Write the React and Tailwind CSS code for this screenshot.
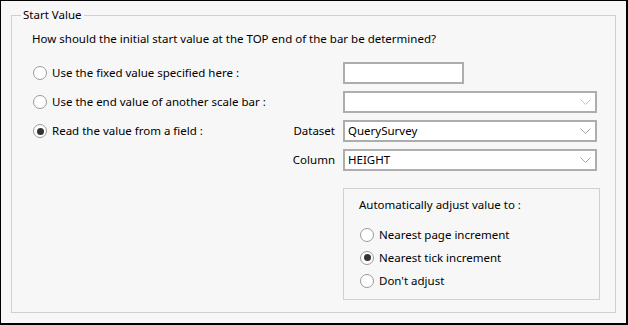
import React from "react";

function Radio({ checked }) {
  return (
    <span className="flex h-[14px] w-[14px] shrink-0 items-center justify-center rounded-full border-[1.5px] border-[#9a9a9a] bg-white">
      {checked && <span className="h-[7px] w-[7px] rounded-full bg-[#333333]" />}
    </span>
  );
}

function Chevron({ light }) {
  return (
    <svg width="11" height="6" viewBox="0 0 11 6" className="mr-[4px]">
      <path d="M0.5 0.5 L5.5 5.5 L10.5 0.5" fill="none" stroke={light ? "#c4c4c4" : "#a6a6a6"} strokeWidth="1" />
    </svg>
  );
}

function Combo({ value, light }) {
  return (
    <div className="flex h-[22px] w-[254px] items-center justify-between border-2 border-[#adadad] bg-white pl-[3px]">
      <span className="leading-[16px]">{value}</span>
      <Chevron light={light} />
    </div>
  );
}

export default function App() {
  return (
    <div
      className="flex h-[325px] w-[628px] border-b-2 border-l border-r-2 border-t border-black bg-[#f7f7f7] pb-[10px] pl-[10px] pr-[10px] pt-[6px] text-[11.5px] text-black"
      style={{ fontFamily: '"Noto Sans", sans-serif' }}
    >
      <fieldset className="m-0 min-w-0 flex-1 border border-[#d0d0d0] p-0">
        <legend className="ml-[9px] px-[2px] leading-[16px]">Start Value</legend>
        <div className="pl-[20px] pt-[8px]">
          <div className="leading-[16px]">How should the initial start value at the TOP end of the bar be determined?</div>
          <div className="mt-[15px] flex flex-col gap-[7px]">
            <div className="flex h-[22px] items-center">
              <div className="flex w-[258px] items-center">
                <span className="ml-[1px]"><Radio /></span>
                <span className="ml-[5px] leading-[16px]">Use the fixed value specified here :</span>
              </div>
              <div className="w-[53px]" />
              <div className="h-[22px] w-[121px] border-2 border-[#adadad] bg-white" />
            </div>
            <div className="flex h-[22px] items-center">
              <div className="flex w-[258px] items-center">
                <span className="ml-[1px]"><Radio /></span>
                <span className="ml-[5px] leading-[16px]">Use the end value of another scale bar :</span>
              </div>
              <div className="w-[53px]" />
              <Combo value="" light />
            </div>
            <div className="flex h-[22px] items-center">
              <div className="flex w-[258px] items-center">
                <span className="ml-[1px]"><Radio checked /></span>
                <span className="ml-[5px] leading-[16px]">Read the value from a field :</span>
              </div>
              <div className="w-[53px] pr-[8px] text-right leading-[16px]">Dataset</div>
              <Combo value="QuerySurvey" />
            </div>
            <div className="flex h-[22px] items-center">
              <div className="w-[258px]" />
              <div className="w-[53px] pr-[8px] text-right leading-[16px]">Column</div>
              <Combo value="HEIGHT" />
            </div>
          </div>
          <div className="ml-[311px] mt-[17px] h-[112px] w-[257px] border border-[#d0d0d0] pl-[15px] pt-[8px]">
            <div className="leading-[16px]">Automatically adjust value to :</div>
            <div className="mt-[10px] flex flex-col">
              <div className="flex h-[23px] items-center">
                <span className="ml-[1px]"><Radio /></span>
                <span className="ml-[5px] leading-[16px]">Nearest page increment</span>
              </div>
              <div className="flex h-[23px] items-center">
                <span className="ml-[1px]"><Radio checked /></span>
                <span className="ml-[5px] leading-[16px]">Nearest tick increment</span>
              </div>
              <div className="flex h-[23px] items-center">
                <span className="ml-[1px]"><Radio /></span>
                <span className="ml-[5px] leading-[16px]">Don't adjust</span>
              </div>
            </div>
          </div>
        </div>
      </fieldset>
    </div>
  );
}
